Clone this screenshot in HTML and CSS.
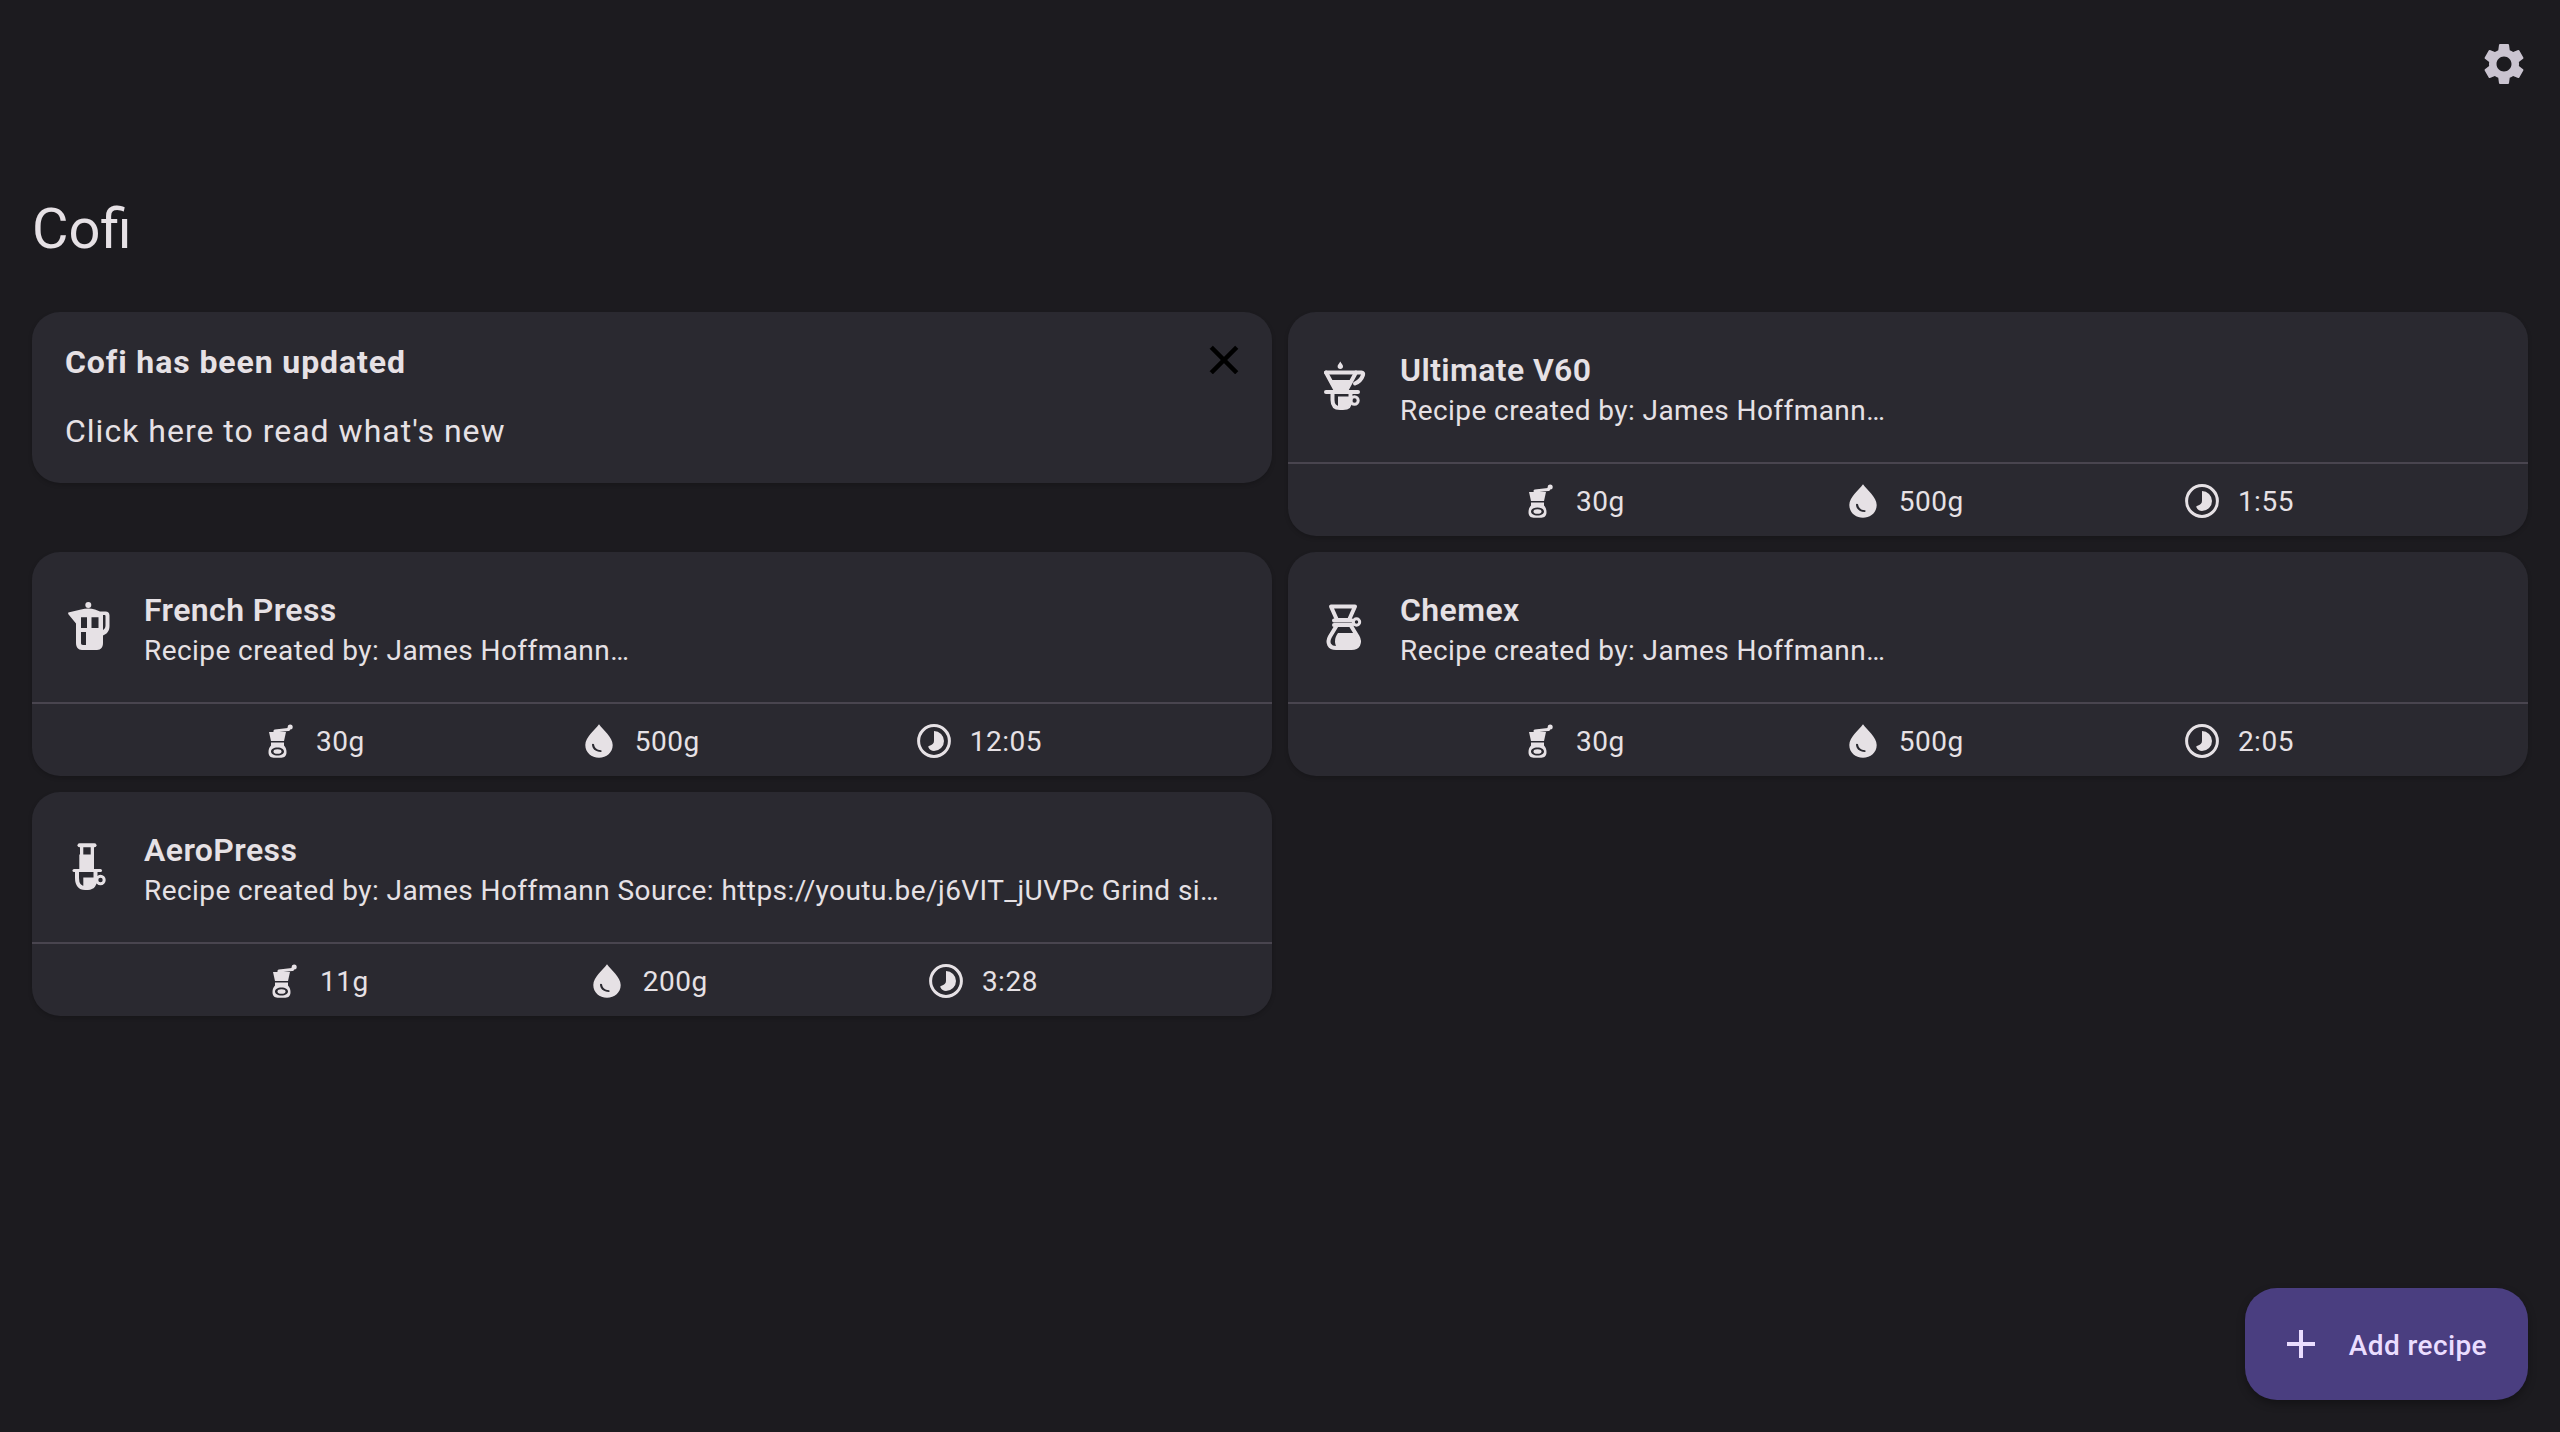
FILE: index.html
```html
<!DOCTYPE html>
<html lang="en">
<head>
    <meta charset="UTF-8">
    <title>Cofi</title>
    <link rel="stylesheet" href="styles.css">
</head>
<body>
<svg class="defs" width="0" height="0">
    <symbol id="i-v60" viewBox="0 0 48 48" overflow="visible">
        <path class="fill" d="M20.3 -1.5C21.5 .5 23 2 23 3.3a2.7 2.7 0 0 1-5.4 0C17.6 2 19.1 .5 20.3 -1.5Z"/>
        <path class="line" d="M6 9.5H41.5C43 9.5 43.5 10.5 43 12C41.5 16.5 38.5 19 35 20.5"/>
        <path class="line" d="M6 9.5L15.5 27M36 9.5L26.5 27"/>
        <path class="fill" d="M11.5 17H31L26 27H16Z"/>
        <path class="line" d="M6 29H38"/>
        <path class="line" d="M12.5 29V37C12.5 42.5 15.5 45 20 45H23C27.5 45 30.5 42.5 30.5 37V29"/>
        <path class="fill" d="M18 33.5H30.5V38C30.5 42 27.5 45 23 45H20C18.5 45 18 44 18 43Z"/>
        <circle class="line thin" cx="34.5" cy="37.5" r="3.7"/>
    </symbol>
    <symbol id="i-press" viewBox="0 0 48 48" overflow="visible">
        <circle class="fill" cx="24.3" cy="2" r="3"/>
        <path class="fill" fill-rule="evenodd" d="M4.3 9.5L17 6.5Q24.5 4.5 31 6.5L36 8.5H41.5C44 8.5 45.5 10 45.5 12.5V23C45.5 28 43 31 39 32.5V40C39 44 37 47 33 47H18C14 47 12 44 12 40V20.5L5 12C4 10.8 4 10 4.3 9.500ZM17 14.3V25H23V14.300ZM27.5 14.3V25H34.5V14.300ZM17 29V40C17 41 17.5 42 19 42H22V29ZM39 12V27C40.5 26 41.5 24.5 41.5 22.5V13C41.5 12.3 41 12 40.5 12Z"/>
    </symbol>
    <symbol id="i-chemex" viewBox="0 0 48 48" overflow="visible">
        <path class="line" d="M11 3.5H35L29 17H17Z"/>
        <path class="line" d="M14 17.5H32M14 22H32"/>
        <circle class="line thin" cx="36.5" cy="19" r="3.2"/>
        <path class="line" d="M17 22L10 33.5C6.5 40 9.5 45 16 45H31.5C38 45 41 40 37.5 33.5L30.5 22"/>
        <path class="fill" d="M18 30H34L37 35.5C39 40 36 45 31.5 45H16C17 44 15 42 15 38.5C15 35 16 32.5 18 30Z"/>
    </symbol>
    <symbol id="i-aero" viewBox="0 0 48 48" overflow="visible">
        <path class="line" d="M15.5 2.3H30.5"/>
        <path class="fill" d="M16 3H19.3V12H16ZM26.7 3H30V12H26.7Z"/>
        <path class="fill" d="M15.3 11.5H30V26H15.3Z"/>
        <path class="line thin" d="M10 27.5H36.5"/>
        <path class="line" d="M13 28V35C13 41.5 16 45 21 45H24C28.5 45 31.5 41.5 31.5 36V28"/>
        <path class="fill" d="M19.3 34.5H31.5V37C31.5 42 28.5 45 24 45H21C19.8 45 19.3 44 19.3 43Z"/>
        <circle class="line thin" cx="36.5" cy="37" r="3.7"/>
    </symbol>
    <symbol id="i-grinder" viewBox="0 0 40 40">
        <path class="line thin" d="M15 10L28 8.5"/>
        <circle class="fill" cx="30.2" cy="6" r="2.5"/>
        <path class="line thin" d="M28.5 8.5L29.5 6"/>
        <path class="fill" d="M9 11H26L24 20H11Z"/>
        <path class="fill" fill-rule="evenodd" d="M11 21.5H24V24.5C25.8 26.5 26.5 28.5 26.5 31C26.5 35 24.5 36.7 21.5 36.7H13.5C10.5 36.7 8.5 35 8.5 31C8.5 28.5 9.2 26.5 11 24.5ZM17.5 26.5C13.5 26.5 11 28.3 11 30.5C11 32.7 13.5 34.5 17.5 34.5C21.5 34.5 24 32.7 24 30.5C24 28.3 21.5 26.5 17.5 26.5Z"/>
        <ellipse class="fill" cx="17.5" cy="30.5" rx="4" ry="2.3"/>
    </symbol>
    <symbol id="i-drop" viewBox="0 0 40 40">
        <path class="fill" fill-rule="evenodd" d="M20 3.3C24 9 33.7 16 33.7 24C33.7 31.5 27.5 36.7 20 36.7C12.5 36.7 6.3 31.5 6.3 24C6.3 16 16 9 20 3.3ZM13 23.3C13 27.5 16 31 22 31C22.8 31 22.8 29.2 22 29.2C18 29.2 15.5 27 15 23.3C14.8 22.5 13 22.5 13 23.3Z"/>
    </symbol>
    <symbol id="i-clock" viewBox="0 0 40 40">
        <circle class="line thin" cx="20" cy="20" r="15.4"/>
        <path class="fill" d="M20 10A10 10 0 0 1 20 30C17.5 30 15.5 28.5 14.5 26.5C14 25.5 14.5 25 15.5 24.8C18 24 20 22.5 20 20Z"/>
    </symbol>
</svg>

<header class="topbar">
    <svg class="gear" viewBox="0 0 24 24"><path d="M19.14 12.94c.04-.3.06-.61.06-.94 0-.32-.02-.64-.07-.94l2.03-1.58c.18-.14.23-.41.12-.61l-1.92-3.32c-.12-.22-.37-.29-.59-.22l-2.39.96c-.5-.38-1.03-.7-1.62-.94l-.36-2.54c-.04-.24-.24-.41-.48-.41h-3.84c-.24 0-.43.17-.47.41l-.36 2.54c-.59.24-1.13.57-1.62.94l-2.39-.96c-.22-.08-.47 0-.59.22L2.74 8.87c-.12.21-.08.47.12.61l2.03 1.58c-.05.3-.09.63-.09.94s.02.64.07.94l-2.03 1.58c-.18.14-.23.41-.12.61l1.92 3.32c.12.22.37.29.59.22l2.39-.96c.5.38 1.03.7 1.62.94l.36 2.54c.05.24.24.41.48.41h3.84c.24 0 .44-.17.47-.41l.36-2.54c.59-.24 1.13-.56 1.62-.94l2.39.96c.22.08.47 0 .59-.22l1.92-3.32c.12-.22.07-.47-.12-.61l-2.01-1.58zM12 15.6c-1.98 0-3.6-1.62-3.6-3.6s1.62-3.6 3.6-3.6 3.6 1.62 3.6 3.6-1.62 3.6-3.6 3.6z"/></svg>
</header>

<h1 class="title">Cofi</h1>

<main class="grid">
    <section class="card notice">
        <h2 class="notice-title">Cofi has been updated</h2>
        <p class="notice-text">Click here to read what's new</p>
        <svg class="icon-48 close" viewBox="0 0 24 24"><path d="M19 6.41L17.59 5 12 10.59 6.41 5 5 6.41 10.59 12 5 17.59 6.41 19 12 13.41 17.59 19 19 17.59 13.41 12z"/></svg>
    </section>

    <section class="card recipe">
        <div class="recipe-head">
            <svg class="icon-48"><use href="#i-v60"/></svg>
            <div class="recipe-text">
                <h2>Ultimate V60</h2>
                <p>Recipe created by: James Hoffmann…</p>
            </div>
        </div>
        <div class="recipe-stats">
            <div class="stat"><svg class="icon-40"><use href="#i-grinder"/></svg>30g</div>
            <div class="stat"><svg class="icon-40"><use href="#i-drop"/></svg>500g</div>
            <div class="stat"><svg class="icon-40"><use href="#i-clock"/></svg>1:55</div>
        </div>
    </section>

    <section class="card recipe">
        <div class="recipe-head">
            <svg class="icon-48"><use href="#i-press"/></svg>
            <div class="recipe-text">
                <h2>French Press</h2>
                <p>Recipe created by: James Hoffmann…</p>
            </div>
        </div>
        <div class="recipe-stats">
            <div class="stat"><svg class="icon-40"><use href="#i-grinder"/></svg>30g</div>
            <div class="stat"><svg class="icon-40"><use href="#i-drop"/></svg>500g</div>
            <div class="stat"><svg class="icon-40"><use href="#i-clock"/></svg>12:05</div>
        </div>
    </section>

    <section class="card recipe">
        <div class="recipe-head">
            <svg class="icon-48"><use href="#i-chemex"/></svg>
            <div class="recipe-text">
                <h2>Chemex</h2>
                <p>Recipe created by: James Hoffmann…</p>
            </div>
        </div>
        <div class="recipe-stats">
            <div class="stat"><svg class="icon-40"><use href="#i-grinder"/></svg>30g</div>
            <div class="stat"><svg class="icon-40"><use href="#i-drop"/></svg>500g</div>
            <div class="stat"><svg class="icon-40"><use href="#i-clock"/></svg>2:05</div>
        </div>
    </section>

    <section class="card recipe">
        <div class="recipe-head">
            <svg class="icon-48"><use href="#i-aero"/></svg>
            <div class="recipe-text">
                <h2>AeroPress</h2>
                <p>Recipe created by: James Hoffmann Source: https://youtu.be/j6VIT_jUVPc Grind si…</p>
            </div>
        </div>
        <div class="recipe-stats">
            <div class="stat"><svg class="icon-40"><use href="#i-grinder"/></svg>11g</div>
            <div class="stat"><svg class="icon-40"><use href="#i-drop"/></svg>200g</div>
            <div class="stat"><svg class="icon-40"><use href="#i-clock"/></svg>3:28</div>
        </div>
    </section>
</main>

<button class="fab">
    <svg class="icon-48" viewBox="0 0 24 24"><path d="M19 13h-6v6h-2v-6H5v-2h6V5h2v6h6v2z"/></svg>
    <span>Add recipe</span>
</button>
</body>
</html>
```

FILE: styles.css
```css
* {
    padding: 0;
    margin: 0;
    box-sizing: border-box;
}
body,html{
    height: 100%;
    overflow: hidden;
}
body{
    background: #1c1b1f;
    color: #e6e1e5;
    font-family: Roboto, "Liberation Sans", sans-serif;
}
.defs{
    position: absolute;
}
.fill{
    fill: #e6e1e5;
}
.line{
    fill: none;
    stroke: #e6e1e5;
    stroke-width: 4;
    stroke-linecap: round;
    stroke-linejoin: round;
}
.thin{
    stroke-width: 3;
}
.icon-48{
    width: 48px;
    height: 48px;
    flex: none;
    overflow: visible;
}
.icon-40{
    width: 40px;
    height: 40px;
    flex: none;
}

.topbar{
    display: flex;
    justify-content: flex-end;
    height: 88px;
    padding: 39px 31px 0 0;
}
.gear{
    width: 50px;
    height: 50px;
    fill: #cac4d0;
}
.title{
    font-size: 56px;
    font-weight: 400;
    line-height: 72px;
    margin: 105px 32px 47px;
}

.grid{
    display: grid;
    grid-template-columns: 1240px 1240px;
    grid-auto-rows: 224px;
    gap: 16px;
    padding: 0 32px;
    align-items: start;
}
.card{
    background: #2a2930;
    border-radius: 28px;
    box-shadow: 0 2px 4px rgba(0,0,0,.18);
    overflow: hidden;
}

.notice{
    position: relative;
    height: 171px;
    padding: 30px 33px;
}
.notice-title{
    font-size: 32px;
    font-weight: 700;
    line-height: 40px;
    letter-spacing: .9px;
}
.notice-text{
    font-size: 32px;
    line-height: 40px;
    letter-spacing: 1px;
    margin-top: 29px;
}
.close{
    position: absolute;
    top: 24px;
    right: 24px;
    fill: #000;
    stroke: #000;
    stroke-width: .3;
}

.recipe{
    height: 224px;
}
.recipe-head{
    display: flex;
    align-items: center;
    gap: 32px;
    height: 152px;
    padding: 0 32px;
    border-bottom: 2px solid #49454f;
}
.recipe-text{
    min-width: 0;
    white-space: nowrap;
}
.recipe-text h2{
    font-size: 32px;
    font-weight: 600;
    line-height: 46px;
    letter-spacing: .4px;
}
.recipe-text p{
    font-size: 28px;
    line-height: 36px;
    height: 34px;
    letter-spacing: .43px;
}
.recipe-stats{
    display: flex;
    justify-content: space-evenly;
    align-items: center;
    height: 72px;
    padding: 2px 16px 0;
}
.stat{
    display: flex;
    align-items: center;
    gap: 16px;
    padding-right: 2px;
    font-size: 28px;
    letter-spacing: .5px;
}

.fab{
    position: absolute;
    right: 32px;
    bottom: 32px;
    display: flex;
    align-items: center;
    gap: 24px;
    height: 112px;
    padding: 0 41px 0 32px;
    background: #4a3e80;
    color: #eaddff;
    border: 0;
    border-radius: 32px;
    box-shadow: 0 4px 8px rgba(0,0,0,.3);
    font-family: inherit;
    font-size: 28px;
    font-weight: 500;
    letter-spacing: .4px;
}
.fab span{
    padding-top: 2px;
}
.fab svg{
    fill: #eaddff;
}
```
